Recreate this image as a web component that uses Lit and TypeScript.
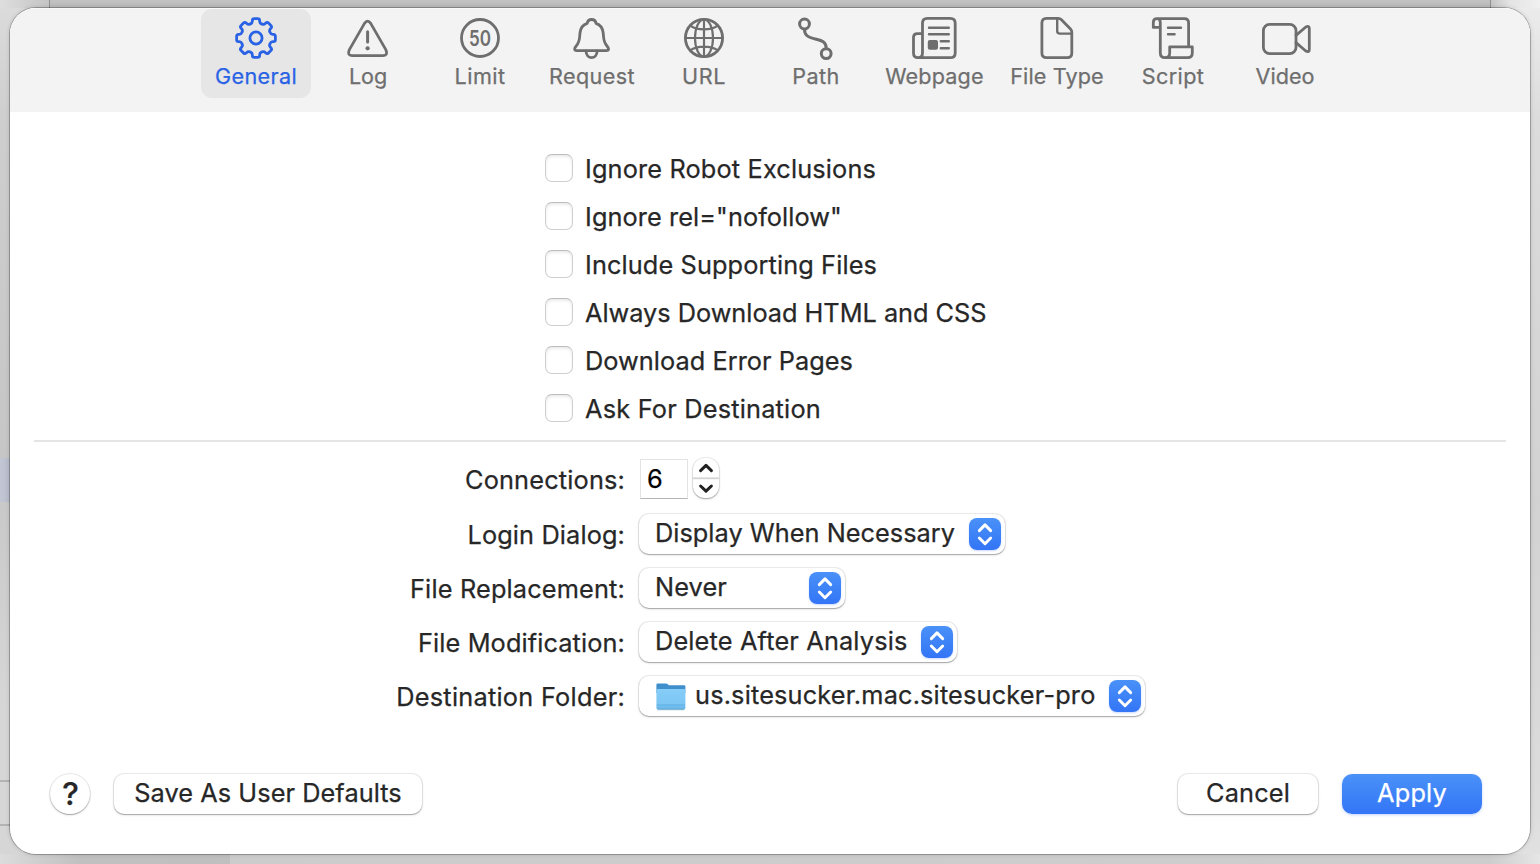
import { LitElement, html, svg, css } from "lit";
import { customElement, property, state } from "lit/decorators.js";
import { classMap } from "lit/directives/class-map.js";
import { styleMap } from "lit/directives/style-map.js";

// Outline of the eight-toothed gear, with every corner rounded.
function gearPath(): string {
  const pts: [number, number][] = [];
  for (let i = 0; i < 8; i++) {
    for (const [r, d] of [[15.3, -14], [19.7, -10.5], [19.7, 10.5], [15.3, 14]]) {
      const a = ((i * 45 + d - 90) * Math.PI) / 180;
      pts.push([r * Math.cos(a), r * Math.sin(a)]);
    }
  }
  const n = pts.length;
  const toward = (p: number[], q: number[], dist: number) => {
    const len = Math.hypot(q[0] - p[0], q[1] - p[1]);
    const k = Math.min(dist, len / 2) / len;
    return `${(p[0] + (q[0] - p[0]) * k).toFixed(2)},${(p[1] + (q[1] - p[1]) * k).toFixed(2)}`;
  };
  return (
    pts
      .map((p, i) => {
        const prev = pts[(i + n - 1) % n];
        const next = pts[(i + 1) % n];
        return `${i ? "L" : "M"}${toward(p, prev, 1.9)} Q${p[0].toFixed(2)},${p[1].toFixed(2)} ${toward(p, next, 1.9)}`;
      })
      .join(" ") + "Z"
  );
}

const icons: Record<string, unknown> = {
  General: svg`<path d=${gearPath()}/><circle r="6.1"/>`,
  Log: svg`<g transform="translate(-.4 0)"><path d="M-3.1,-14.6 Q0,-19 3.1,-14.6 L18.2,11.6 Q20.8,17.4 15.6,17.6 H-15.6 Q-20.8,17.4 -18.2,11.6Z"/>
    <path d="M0,-6.2 V4" stroke-width="3"/><circle cy="10.3" r="2.1" class="solid"/></g>`,
  Limit: svg`<circle r="18.5"/><text x="-11" y="7.9" textLength="22" lengthAdjust="spacingAndGlyphs">50</text>`,
  Request: svg`<g transform="translate(-.4 0)"><path d="M-14.6,12.6 C-18,12.6 -17.2,10 -15.4,8 C-11.5,3.8 -12.2,0 -11.6,-5 C-11,-10.6 -8.4,-13.4 -4.4,-14.6 C-3.6,-19.8 3.6,-19.8 4.4,-14.6 C8.4,-13.4 11,-10.6 11.6,-5 C12.2,0 11.5,3.8 15.4,8 C17.2,10 18,12.6 14.6,12.6Z"/>
    <path d="M-5.6,13 C-5.2,21.8 5.2,21.8 5.6,13"/></g>`,
  URL: svg`<circle r="18.6"/><g stroke-width="2.2"><ellipse rx="9" ry="18.6"/><path d="M0,-18.6 V18.6 M-18.6,0 H18.6 M-13.8,-12.4 C-7,-7.4 7,-7.4 13.8,-12.4 M-13.8,12.4 C-7,7.4 7,7.4 13.8,12.4"/></g>`,
  Path: svg`<g stroke-width="3" transform="translate(-.3 0)"><circle cx="-11.2" cy="-14" r="4.9"/><circle cx="10.5" cy="15.6" r="4.9"/>
    <path d="M-11.2,-8.5 C-11.2,-1.6 -6,-0.5 -0.4,1 C5.2,2.4 10.5,3.2 10.5,10.2"/></g>`,
  Webpage: svg`<g transform="translate(-.8 0)"><path d="M-16.2,19.7 H16 Q21,19.7 21,14.9 V-14.9 Q21,-19.7 16,-19.7 H-6.8 Q-11.7,-19.7 -11.7,-14.9 V15 Q-11.7,19.7 -16.2,19.7 Q-20.7,19.7 -20.7,15 V-0.4 Q-20.7,-4.3 -16.8,-4.3 H-11.7"/>
    <path d="M-5.2,-10.3 H14.6 M-5.2,-3.7 H14.6 M6.6,3.3 H14.6 M6.6,10.3 H14.6" stroke-width="2.4"/><rect x="-6.4" y="2" width="10.2" height="9.8" rx="2" class="solid"/></g>`,
  "File Type": svg`<path d="M-10.4,-19.7 H1.4 Q3,-19.7 4.2,-18.5 L13.5,-9 Q14.8,-7.6 14.8,-6 V15 Q14.8,19.7 10.2,19.7 H-10.4 Q-15.1,19.7 -15.1,15 V-15 Q-15.1,-19.7 -10.4,-19.7Z"/>
    <path d="M0.2,-19 V-7 Q0.2,-4.4 2.8,-4.4 H14.4" stroke-width="2.4"/>`,
  Script: svg`<path d="M-16,-19.4 H11.4 Q15.6,-19.4 15.6,-15.2 V8.5 M-16,-19.4 Q-19.7,-19.4 -19.7,-15.6 V-10.6 H-12.7 M-16,-19.4 Q-12.7,-19.4 -12.7,-15.6 V14.8 Q-12.7,19.7 -8,19.7 H14.6 Q19.3,19.7 19.3,15 V8.9 H-3.3 V15 Q-3.3,19.7 -8,19.7"/>
    <path d="M-5,-10.3 H8 M-5,-3.7 H1.6" stroke-width="2.4"/>`,
  Video: svg`<rect x="-21.6" y="-13.6" width="32.6" height="29.2" rx="6.2"/><path d="M11,-2.6 L20.8,-11 Q24.3,-12.8 24.3,-9.4 V11.4 Q24.3,14.8 20.8,13 L11,4.6"/>`,
};

// A single line of text whose tracking is adjusted so it spans a given width.
@customElement("tracked-text")
class TrackedText extends LitElement {
  static styles = css`
    :host { display: inline-block; white-space: nowrap; flex: none; }
    .line { display: inline-block; }
  `;
  @property() text = "";
  @property({ type: Number }) span = 0;
  @state() private tracking = 0;

  async firstUpdated() {
    const line = this.renderRoot.querySelector(".line") as HTMLElement;
    await this.updateComplete;
    this.tracking = (this.span - line.getBoundingClientRect().width) / this.text.length;
  }
  render() {
    return html`<span class="line" style=${styleMap({ letterSpacing: `${this.tracking}px` })}>${this.text}</span>`;
  }
}

@customElement("popup-button")
class PopupButton extends LitElement {
  static styles = css`
    :host { display: block; }
    .popup {
      box-sizing: border-box; height: 40px; padding: 4px 4px 4px 16px;
      display: flex; align-items: center; justify-content: space-between;
      background: #fff; border-radius: 10px; color: #272727; line-height: 32px;
      box-shadow: 0 0 0 1px rgba(0,0,0,.07), 0 1px 1px rgba(0,0,0,.22), 0 1px 3px rgba(0,0,0,.12);
    }
    .value { display: flex; gap: 9px; height: 32px; margin-top: -3px; }
    .folder { width: 30px; height: 32px; margin: 2px 0 0 1px; }
    .arrows {
      width: 32px; height: 32px; border-radius: 8px; flex: none;
      background: linear-gradient(#4a91f8, #3375f6);
      box-shadow: 0 1px 2px rgba(50,110,240,.25);
    }
    .arrows path { fill: none; stroke: #fff; stroke-width: 2.9; stroke-linecap: round; stroke-linejoin: round; }
  `;
  @property() text = "";
  @property({ type: Number }) span = 0;
  @property({ type: Number }) width = 0;
  @property({ type: Boolean }) folder = false;

  render() {
    return html`<div class="popup" style=${styleMap({ width: `${this.width}px` })}>
      <span class="value">
        ${this.folder
          ? html`<svg class="folder" viewBox="0 0 30 32">
              <defs>
                <linearGradient id="front" x2="0" y2="1"><stop offset="0" stop-color="#86cdf8"/><stop offset=".78" stop-color="#7cc6f4"/><stop offset="1" stop-color="#62b0e4"/></linearGradient>
              </defs>
              <path d="M.4,3.6 Q.4,2.4 1.6,2.4 H10 Q11.2,2.4 12,3.4 Q12.7,4.3 14,4.3 H28.2 Q29.4,4.3 29.4,5.5 V12 H.4Z" fill="#3f8fcd"/>
              <path d="M.4,9.2 Q.4,8 1.6,8 H28.2 Q29.4,8 29.4,9.2 V26.8 Q29.4,28.3 27.9,28.3 H1.9 Q.4,28.3 .4,26.8Z" fill="url(#front)"/>
              <path d="M.8,24 H29" stroke="#5baee3" stroke-width="1"/>
              <path d="M1.4,28.7 H28.4" stroke="#4a8fbb" stroke-width="1" opacity=".7"/>
            </svg>`
          : ""}
        <tracked-text .text=${this.text} .span=${this.span}></tracked-text>
      </span>
      <svg class="arrows" viewBox="0 0 32 32"><path d="M10.3,12.6 L16,6.9 L21.7,12.6 M10.3,20 L16,25.7 L21.7,20"/></svg>
    </div>`;
  }
}

@customElement("app-root")
class AppRoot extends LitElement {
  static styles = css`
    :host {
      display: block; box-sizing: border-box; width: 1540px; height: 864px; overflow: hidden;
      padding: 8px 10px 10px;
      font-family: Inter, "Liberation Sans", sans-serif; font-size: 25.3px; color: #272727;
      -webkit-text-stroke: .25px currentColor;
      background:
        linear-gradient(#b3b3b3, #b3b3b3) 0 780px / 10px 2px no-repeat,
        linear-gradient(#b3b3b3, #b3b3b3) 0 824px / 10px 2px no-repeat,
        linear-gradient(90deg, #c3c6d3, #b9bccb) 0 458px / 10px 44px no-repeat,
        linear-gradient(#8f8f8f, #8f8f8f) 49px 0 / 1px 8px no-repeat,
        linear-gradient(#8f8f8f, #8f8f8f) 1490px 0 / 1px 8px no-repeat,
        linear-gradient(#c2c2c2, #bababa) 50px 0 / 1440px 8px no-repeat,
        linear-gradient(90deg, #dedede, #c4c4c4 50px, #c4c4c4 1490px, #e4e4e4 1510px, #f0f0f0) 0 0 / 1540px 8px no-repeat,
        linear-gradient(90deg, #dcdcdc, #c0c0c0 80px, #bfbfbf) 0 854px / 230px 10px no-repeat,
        linear-gradient(90deg, #cccccc, #cdcdcd 1260px, #e6e6e6) 230px 854px / 1310px 10px no-repeat,
        linear-gradient(#dcdcdc, #cecece 120px, #c6c6c6 460px, #d6d6d6 700px, #d6d6d6) 0 0 / 40px 864px no-repeat,
        linear-gradient(#ececec, #dcdcdc 120px, #d2d2d2 500px, #dcdcdc 800px, #e2e2e2);
    }
    .window {
      height: 846px; display: flex; flex-direction: column; overflow: hidden;
      background: #fff; border-radius: 26px;
    }
    .frame { border-radius: 26px; box-shadow: 0 0 0 1px rgba(0,0,0,.24), 0 0 5px rgba(0,0,0,.18); }
    .toolbar {
      height: 104px; flex: none; box-sizing: border-box; padding: 1px 0 0 191px;
      display: flex; gap: 2px; background: #f3f3f3; box-shadow: inset 0 1px 0 #fafafa;
    }
    .tab {
      height: 89px; border-radius: 11px; display: flex; flex-direction: column; align-items: center;
      font-size: 21.6px; line-height: 28px; color: #6e6e6e;
    }
    .tab.active { background: #e6e6e6; color: #2962e4; }
    .glyph {
      width: 60px; height: 48px; margin-top: 5px; flex: none; overflow: visible;
      fill: none; stroke: currentColor; stroke-width: 2.8; stroke-linecap: round; stroke-linejoin: round;
    }
    .glyph .solid { fill: currentColor; stroke: none; }
    .glyph text { fill: currentColor; stroke: none; font-size: 21.6px; font-weight: 600; }
    .checks { padding: 32px 0 0 535px; display: flex; flex-direction: column; }
    .check { height: 48px; display: flex; align-items: center; gap: 12px; line-height: 48px; }
    .box {
      box-sizing: border-box; width: 28px; height: 28px; border-radius: 7px; background: #fff;
      border: 1px solid #cfcfcf; border-top-color: #bcbcbc;
      box-shadow: inset 0 2px 3px rgba(0,0,0,.08);
    }
    .check tracked-text { margin-top: 2px; }
    .rule { height: 2px; margin: 8px 24px 0; background: #e5e5e5; flex: none; }
    .form {
      display: grid; grid-template-columns: 615px auto; grid-template-rows: 55px repeat(4, 54px);
      column-gap: 14px; padding-top: 10px; justify-items: start;
    }
    .form .caption { justify-self: end; height: 54px; line-height: 56px; }
    .cell { height: 54px; display: flex; align-items: center; }
    .cell.first { align-items: flex-start; padding-top: 6px; box-sizing: border-box; }
    .field {
      box-sizing: border-box; width: 48px; height: 40px; margin: 1px 5px 0 1px; padding-left: 6px;
      border: 1px solid #e3e3e3; border-bottom-color: #b4b4b4; line-height: 37px; color: #000;
    }
    .stepper {
      width: 26px; height: 40px; border-radius: 12px;
      box-shadow: 0 0 0 1px rgba(0,0,0,.07), 0 1px 1px rgba(0,0,0,.2), 0 1px 3px rgba(0,0,0,.14);
    }
    .stepper path { fill: none; stroke: #222; stroke-width: 3; stroke-linecap: round; stroke-linejoin: round; }
    .footer { margin-top: auto; padding: 0 48px 40px 40px; display: flex; }
    .button {
      box-sizing: border-box; height: 40px; border-radius: 10px; display: flex; justify-content: center;
      line-height: 38px; background: #fff;
      box-shadow: 0 0 0 1px rgba(0,0,0,.07), 0 1px 1px rgba(0,0,0,.22), 0 1px 3px rgba(0,0,0,.12);
    }
    .help { width: 40px; padding-left: 1px; border-radius: 50%; font-size: 31.5px; line-height: 40px; font-weight: 500; }
    .save { width: 308px; margin-left: 24px; margin-right: auto; }
    .cancel { width: 140px; margin-right: 24px; }
    .apply {
      width: 140px; color: #fff; background: linear-gradient(#4a91f8, #3375f6);
      box-shadow: 0 1px 3px rgba(50,110,240,.3);
    }
  `;

  @state() private active = "General";

  private tabs = [
    { name: "General", width: 110, span: 82 },
    { name: "Log", width: 110, span: 38 },
    { name: "Limit", width: 110, span: 51 },
    { name: "Request", width: 110, span: 86 },
    { name: "URL", width: 110, span: 44 },
    { name: "Path", width: 110, span: 47.5 },
    { name: "Webpage", width: 123, span: 98.5 },
    { name: "File Type", width: 118, span: 93.5 },
    { name: "Script", width: 110, span: 62.5 },
    { name: "Video", width: 110, span: 59 },
  ];

  private checks = [
    { text: "Ignore Robot Exclusions", span: 291 },
    { text: 'Ignore rel="nofollow"', span: 257 },
    { text: "Include Supporting Files", span: 292 },
    { text: "Always Download HTML and CSS", span: 401.5 },
    { text: "Download Error Pages", span: 268 },
    { text: "Ask For Destination", span: 236 },
  ];

  private popups = [
    { caption: "Login Dialog:", capSpan: 157.5, text: "Display When Necessary", span: 300, width: 366, folder: false },
    { caption: "File Replacement:", capSpan: 215, text: "Never", span: 72, width: 206, folder: false },
    { caption: "File Modification:", capSpan: 207, text: "Delete After Analysis", span: 252.5, width: 318, folder: false },
    { caption: "Destination Folder:", capSpan: 228.8, text: "us.sitesucker.mac.sitesucker-pro", span: 400.5, width: 506, folder: true },
  ];

  render() {
    return html`<div class="frame"><div class="window">
      <div class="toolbar">
        ${this.tabs.map(
          (t) => html`<div
            class=${classMap({ tab: true, active: t.name === this.active })}
            style=${styleMap({ width: `${t.width}px` })}
            @click=${() => (this.active = t.name)}
          >
            <svg class="glyph" viewBox="-30 -24 60 48">${icons[t.name]}</svg>
            <tracked-text .text=${t.name} .span=${t.span}></tracked-text>
          </div>`
        )}
      </div>
      <div class="checks">
        ${this.checks.map(
          (c) => html`<div class="check"><span class="box"></span><tracked-text .text=${c.text} .span=${c.span}></tracked-text></div>`
        )}
      </div>
      <div class="rule"></div>
      <div class="form">
        <tracked-text class="caption" .text=${"Connections:"} .span=${160}></tracked-text>
        <div class="cell first">
          <div class="field">6</div>
          <svg class="stepper" viewBox="0 0 26 40">
            <path d="M7.6,12.6 L13,7.4 L18.4,12.6 M7.6,28 L13,33.2 L18.4,28"/>
            <rect y="19.4" width="26" height="1.8" fill="#d4d4d4"/>
          </svg>
        </div>
        ${this.popups.map(
          (p) => html`<tracked-text class="caption" .text=${p.caption} .span=${p.capSpan}></tracked-text>
            <div class="cell">
              <popup-button .text=${p.text} .span=${p.span} .width=${p.width} .folder=${p.folder}></popup-button>
            </div>`
        )}
      </div>
      <div class="footer">
        <div class="button help">?</div>
        <div class="button save"><tracked-text .text=${"Save As User Defaults"} .span=${267.5}></tracked-text></div>
        <div class="button cancel"><tracked-text .text=${"Cancel"} .span=${84}></tracked-text></div>
        <div class="button apply"><tracked-text .text=${"Apply"} .span=${70}></tracked-text></div>
      </div>
    </div></div>`;
  }
}
